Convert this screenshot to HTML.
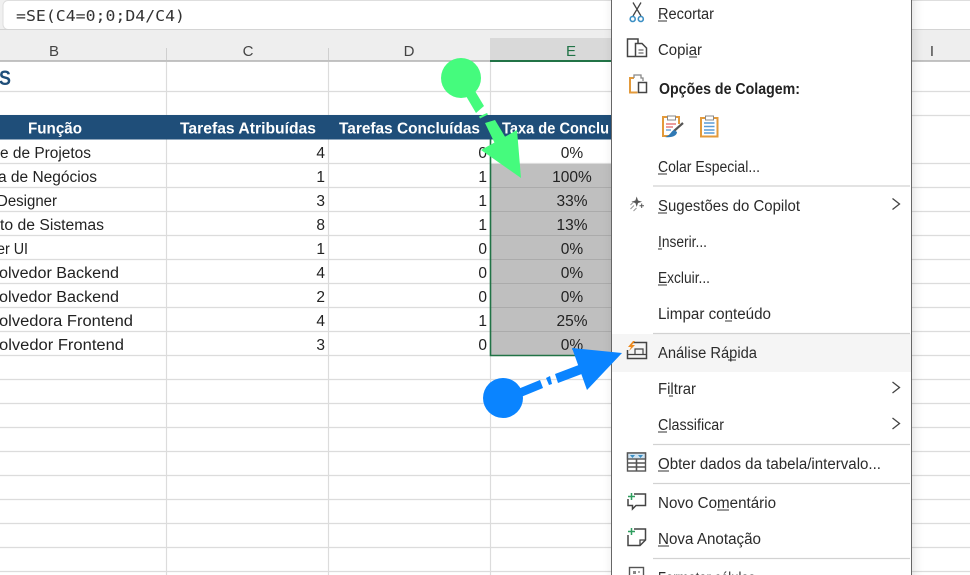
<!DOCTYPE html>
<html lang="pt">
<head>
<meta charset="utf-8">
<title>Excel</title>
<style>
html,body{margin:0;padding:0;background:#fff;width:970px;height:575px;overflow:hidden}
svg{display:block}
text{font-family:"Liberation Sans",sans-serif;font-size:15.5px;fill:#222}
.m text{fill:#2b2b2b}
.h text{fill:#fff;font-weight:bold}
.c text{fill:#444;font-size:15px;text-anchor:middle}
.g line{stroke:#dcdcdc;stroke-width:1.2}
.u line{stroke:#333;stroke-width:1}
.s line{stroke:#d2d2d2;stroke-width:1.2}
.i{fill:none;stroke:#444;stroke-width:1.5}
</style>
</head>
<body>
<svg width="970" height="575" viewBox="0 0 970 575" xmlns="http://www.w3.org/2000/svg">
<defs>
<filter id="sh" x="-5%" y="-5%" width="110%" height="110%"><feGaussianBlur stdDeviation="5"/></filter>
</defs>
<rect width="970" height="575" fill="#fff"/>

<!-- formula bar -->
<rect x="0" y="0" width="970" height="30" fill="#f0f0f0"/>
<rect x="3" y="0.500" width="985" height="29" rx="5" fill="#fff" stroke="#dedede"/>
<text x="16" y="21" textLength="169" lengthAdjust="spacingAndGlyphs" style="font-family:'DejaVu Sans Mono',monospace;font-size:15.5px;fill:#333">=SE(C4=0;0;D4/C4)</text>

<!-- column headers -->
<rect x="0" y="30" width="970" height="31" fill="#eeeeee"/>
<rect x="490" y="38" width="122" height="23" fill="#d9d9d9"/>
<line x1="0" y1="61" x2="970" y2="61" stroke="#b0b0b0" stroke-width="1.4"/>
<line x1="0" y1="29.5" x2="970" y2="29.5" stroke="#d4d4d4"/>
<line x1="166.5" y1="48" x2="166.5" y2="60" stroke="#cfcfcf"/>
<line x1="328.5" y1="48" x2="328.5" y2="60" stroke="#cfcfcf"/>
<g class="c">
<text x="54" y="56">B</text>
<text x="248" y="56">C</text>
<text x="409" y="56">D</text>
<text x="571" y="56" style="fill:#217346">E</text>
<text x="932" y="56">I</text>
</g>
<rect x="490" y="60" width="122" height="2" fill="#217346"/>

<!-- grid -->
<g class="g">
<line x1="0" y1="91.5" x2="970" y2="91.5"/>
<line x1="0" y1="115.5" x2="970" y2="115.5"/>
<line x1="0" y1="163.5" x2="970" y2="163.5"/>
<line x1="0" y1="187.5" x2="970" y2="187.5"/>
<line x1="0" y1="211.5" x2="970" y2="211.5"/>
<line x1="0" y1="235.5" x2="970" y2="235.5"/>
<line x1="0" y1="259.5" x2="970" y2="259.5"/>
<line x1="0" y1="283.5" x2="970" y2="283.5"/>
<line x1="0" y1="307.5" x2="970" y2="307.5"/>
<line x1="0" y1="331.5" x2="970" y2="331.5"/>
<line x1="0" y1="355.5" x2="970" y2="355.5"/>
<line x1="0" y1="379.5" x2="970" y2="379.5"/>
<line x1="0" y1="403.5" x2="970" y2="403.5"/>
<line x1="0" y1="427.5" x2="970" y2="427.5"/>
<line x1="0" y1="451.5" x2="970" y2="451.5"/>
<line x1="0" y1="475.5" x2="970" y2="475.5"/>
<line x1="0" y1="499.5" x2="970" y2="499.5"/>
<line x1="0" y1="523.5" x2="970" y2="523.5"/>
<line x1="0" y1="547.5" x2="970" y2="547.5"/>
<line x1="0" y1="571.5" x2="970" y2="571.5"/>
<line x1="166.5" y1="62" x2="166.5" y2="575"/>
<line x1="328.5" y1="62" x2="328.5" y2="575"/>
<line x1="490.5" y1="62" x2="490.5" y2="575"/>
</g>

<!-- title -->
<text x="-1" y="85" textLength="12" lengthAdjust="spacingAndGlyphs" style="font-size:21px;font-weight:bold;fill:#1f4e79">S</text>

<!-- table header -->
<rect x="0" y="115" width="612" height="24.500" fill="#1f4e79"/>
<g class="h">
<text x="28" y="133.500" textLength="54" lengthAdjust="spacingAndGlyphs">Função</text>
<text x="180" y="133.500" textLength="136" lengthAdjust="spacingAndGlyphs">Tarefas Atribuídas</text>
<text x="339" y="133.500" textLength="141" lengthAdjust="spacingAndGlyphs">Tarefas Concluídas</text>
<text x="502" y="133.500" textLength="107" lengthAdjust="spacingAndGlyphs">Taxa de Conclu</text>
</g>

<!-- col B -->
<text x="0" y="158" textLength="91" lengthAdjust="spacingAndGlyphs">e de Projetos</text>
<text x="-2" y="182" textLength="99" lengthAdjust="spacingAndGlyphs">a de Negócios</text>
<text x="-3" y="206" textLength="60" lengthAdjust="spacingAndGlyphs">Designer</text>
<text x="0" y="230" textLength="104" lengthAdjust="spacingAndGlyphs">to de Sistemas</text>
<text x="-3" y="254" textLength="31" lengthAdjust="spacingAndGlyphs">er UI</text>
<text x="-1" y="278" textLength="120" lengthAdjust="spacingAndGlyphs">olvedor Backend</text>
<text x="-1" y="302" textLength="120" lengthAdjust="spacingAndGlyphs">olvedor Backend</text>
<text x="-1" y="326" textLength="134" lengthAdjust="spacingAndGlyphs">olvedora Frontend</text>
<text x="-1" y="350" textLength="125" lengthAdjust="spacingAndGlyphs">olvedor Frontend</text>

<!-- col C -->
<g text-anchor="end">
<text x="325" y="158">4</text><text x="325" y="182">1</text><text x="325" y="206">3</text>
<text x="325" y="230">8</text><text x="325" y="254">1</text><text x="325" y="278">4</text>
<text x="325" y="302">2</text><text x="325" y="326">4</text><text x="325" y="350">3</text>
<text x="487" y="158">0</text><text x="487" y="182">1</text><text x="487" y="206">1</text>
<text x="487" y="230">1</text><text x="487" y="254">0</text><text x="487" y="278">0</text>
<text x="487" y="302">0</text><text x="487" y="326">1</text><text x="487" y="350">0</text>
</g>

<!-- selection -->
<rect x="491" y="164" width="121" height="191" fill="#bfbfbf"/>
<g stroke="#ababab" stroke-width="1">
<line x1="491" y1="187.5" x2="612" y2="187.5"/>
<line x1="491" y1="211.5" x2="612" y2="211.5"/>
<line x1="491" y1="235.5" x2="612" y2="235.5"/>
<line x1="491" y1="259.5" x2="612" y2="259.5"/>
<line x1="491" y1="283.5" x2="612" y2="283.5"/>
<line x1="491" y1="307.5" x2="612" y2="307.5"/>
<line x1="491" y1="331.5" x2="612" y2="331.5"/>
</g>
<path d="M490.5 139V355.5H612" fill="none" stroke="#217346" stroke-width="1.6"/>
<g text-anchor="middle">
<text x="572" y="158">0%</text><text x="572" y="182">100%</text><text x="572" y="206">33%</text>
<text x="572" y="230">13%</text><text x="572" y="254">0%</text><text x="572" y="278">0%</text>
<text x="572" y="302">0%</text><text x="572" y="326">25%</text><text x="572" y="350">0%</text>
</g>

<!-- context menu -->
<rect x="612" y="-10" width="303" height="600" fill="#000" opacity=".10" filter="url(#sh)"/>
<rect x="611.5" y="-5" width="300" height="590" fill="#fff" stroke="#666"/>
<rect x="612" y="334" width="299" height="38" fill="#f5f5f5"/>
<g class="s">
<line x1="653" y1="186" x2="910" y2="186"/>
<line x1="653" y1="333.5" x2="910" y2="333.5"/>
<line x1="653" y1="444.5" x2="910" y2="444.5"/>
<line x1="653" y1="483.5" x2="910" y2="483.5"/>
<line x1="653" y1="558.5" x2="910" y2="558.5"/>
</g>
<g class="m">
<text x="658" y="19" textLength="56" lengthAdjust="spacingAndGlyphs">Recortar</text>
<text x="658" y="55" textLength="44" lengthAdjust="spacingAndGlyphs">Copiar</text>
<text x="659" y="94" textLength="141" lengthAdjust="spacingAndGlyphs" style="font-weight:bold;fill:#222">Opções de Colagem:</text>
<text x="658" y="172" textLength="102" lengthAdjust="spacingAndGlyphs">Colar Especial...</text>
<text x="658" y="211" textLength="142" lengthAdjust="spacingAndGlyphs">Sugestões do Copilot</text>
<text x="658" y="247" textLength="49" lengthAdjust="spacingAndGlyphs">Inserir...</text>
<text x="658" y="283" textLength="52" lengthAdjust="spacingAndGlyphs">Excluir...</text>
<text x="658" y="319" textLength="113" lengthAdjust="spacingAndGlyphs">Limpar conteúdo</text>
<text x="658" y="358" textLength="99" lengthAdjust="spacingAndGlyphs">Análise Rápida</text>
<text x="658" y="394" textLength="38" lengthAdjust="spacingAndGlyphs">Filtrar</text>
<text x="658" y="430" textLength="66" lengthAdjust="spacingAndGlyphs">Classificar</text>
<text x="658" y="469" textLength="223" lengthAdjust="spacingAndGlyphs">Obter dados da tabela/intervalo...</text>
<text x="658" y="508" textLength="118" lengthAdjust="spacingAndGlyphs">Novo Comentário</text>
<text x="658" y="544" textLength="103" lengthAdjust="spacingAndGlyphs">Nova Anotação</text>
<text x="658" y="583" textLength="108" lengthAdjust="spacingAndGlyphs">Formatar células...</text>
</g>
<g class="u">
<line x1="658" y1="21" x2="667" y2="21"/>
<line x1="689" y1="57" x2="697" y2="57"/>
<line x1="658" y1="174" x2="667" y2="174"/>
<line x1="658" y1="213" x2="667" y2="213"/>
<line x1="658" y1="249" x2="662" y2="249"/>
<line x1="658" y1="285" x2="667" y2="285"/>
<line x1="725" y1="321" x2="732" y2="321"/>
<line x1="728" y1="360" x2="736" y2="360"/>
<line x1="669" y1="396" x2="673" y2="396"/>
<line x1="658" y1="432" x2="667" y2="432"/>
<line x1="658" y1="471" x2="669" y2="471"/>
<line x1="717" y1="510" x2="729" y2="510"/>
<line x1="658" y1="546" x2="669" y2="546"/>
</g>

<!-- chevrons -->
<g fill="none" stroke="#444" stroke-width="1.3">
<path d="M892.5 198.500l7 5.500-7 5.500"/>
<path d="M892.5 382l7 5.500-7 5.500"/>
<path d="M892.5 418l7 5.500-7 5.500"/>
</g>

<!-- scissors -->
<g fill="none">
<path d="M633 2.500L641 16M641 2.500L633 16" stroke="#444" stroke-width="1.300"/>
<circle cx="632.700" cy="19" r="2.500" stroke="#3b8fc4" stroke-width="1.600"/>
<circle cx="640.800" cy="19" r="2.500" stroke="#3b8fc4" stroke-width="1.600"/>
</g>
<!-- copy -->
<g class="i">
<path d="M635 56.500H627.500V39H638V43"/>
<path d="M635.500 43.500H642L646.500 48V56.500H635.500Z"/>
<path d="M638.500 50H643.500M638.500 53H643.500" stroke-width="1.100"/>
</g>
<!-- paste -->
<path d="M637.500 92.500H630V78H634" fill="none" stroke="#e39a3b" stroke-width="2"/>
<path d="M634 78V75H641V78H643V81" fill="none" stroke="#888" stroke-width="1.300"/>
<rect x="638.500" y="82.500" width="8" height="10" fill="#fff" stroke="#444" stroke-width="1.500"/>
<!-- paste option 1 -->
<path d="M668 117H663V136H669M675 117H679V124" fill="none" stroke="#e39a3b" stroke-width="2"/>
<rect x="667.500" y="116" width="8" height="4" fill="#fff" stroke="#888"/>
<path d="M666 124H676M666 127H673" stroke="#e06060" stroke-width="1.300"/>
<path d="M666 130H671" stroke="#5a9bd5" stroke-width="1.300"/>
<path d="M683 123L674 131" stroke="#555" stroke-width="2.200"/>
<path d="M674 130C671 131 671 135 665 137C671 138 677 136 677 132Z" fill="#2f79b5"/>
<!-- paste option 2 -->
<rect x="701" y="118" width="16.500" height="18.500" fill="#fff" stroke="#e39a3b" stroke-width="2"/>
<rect x="705.500" y="116" width="8" height="4" fill="#fff" stroke="#888"/>
<path d="M704 123H714.500M704 126.500H714.500M704 130H714.500M704 133H714.500" stroke="#5a9bd5" stroke-width="1.400"/>
<!-- sparkle -->
<path d="M636.700 196.500L638 200.500L642 201.700L638 203L636.700 207L635.400 203L631.400 201.700L635.400 200.500Z" fill="#555"/>
<path d="M641.700 203.500V208M639.500 205.700H644" stroke="#555" stroke-width="1"/>
<path d="M630.500 205l3-3M630.500 209l3.500-3.500M633.500 211l3-3" stroke="#999" stroke-width="1"/>
<!-- quick analysis -->
<g class="i">
<path d="M633 342.500H646.500V358.500H627.500V350"/>
<path d="M627.500 354.500H646.500M635 354.500V349H643V354.500" stroke-width="1.200"/>
</g>
<path d="M633 341L628 347H631L629 351L635 345H632L635 341Z" fill="#ec8a1e"/>
<!-- table -->
<rect x="627.500" y="453" width="18" height="18" fill="#fff" stroke="#555" stroke-width="1.400"/>
<rect x="627.500" y="453" width="18" height="6" fill="#cfe3f2" stroke="#555" stroke-width="1.400"/>
<path d="M630 455h5l-2.500 3ZM638 455h5l-2.500 3Z" fill="#3b8fc4"/>
<path d="M628 463H645M628 467H645M636.500 459V471" stroke="#555" stroke-width="1.600"/>
<!-- comment -->
<path d="M634 494H645.500V505.500H636L632.500 509V505.500H628V499" fill="none" stroke="#444" stroke-width="1.500"/>
<path d="M631.500 493V500M628 496.500H635" stroke="#2f9e5f" stroke-width="1.500"/>
<!-- note -->
<path d="M634 529H645.500V540L640 545.500H628V535" fill="none" stroke="#444" stroke-width="1.500"/>
<path d="M645.500 540H640V545.500" fill="none" stroke="#444" stroke-width="1.300"/>
<path d="M631.500 528V535M628 531.500H635" stroke="#2f9e5f" stroke-width="1.500"/>
<!-- format cells -->
<rect x="629.500" y="567.500" width="14" height="14" fill="#fff" stroke="#555" stroke-width="1.400"/>
<rect x="633" y="571" width="3" height="3" fill="#888"/>
<rect x="638" y="571" width="2" height="2" fill="#aaa"/>

<!-- green arrow -->
<g fill="#45fb7d">
<circle cx="461" cy="78" r="20"/>
<path d="M466 96L475 91L484 106L476 113Z"/>
<path d="M479 116.500L487 113L488 114.500L480 118.500Z"/>
<path d="M485 123L495 120L510 145L498 150Z"/>
<path d="M517 130L521 178L481 150Z"/>
</g>
<!-- blue arrow -->
<g fill="#0a84ff">
<circle cx="503" cy="398" r="20"/>
<path d="M518 389L540 380L543 388L521 397Z"/>
<path d="M546 378L550 376L552 384L549 385Z"/>
<path d="M555 374L584 363L587 372L558 383Z"/>
<path d="M572 348L622 353L587 390Z"/>
</g>
</svg>
</body>
</html>
